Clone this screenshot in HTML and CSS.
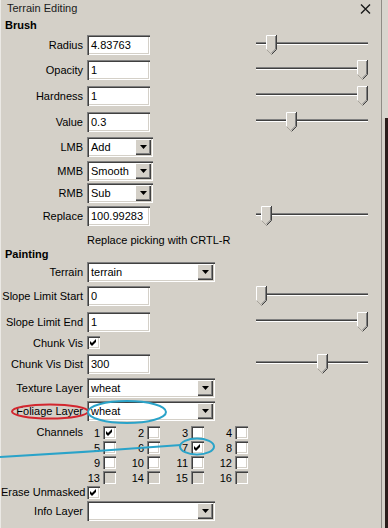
FILE: index.html
```html
<!DOCTYPE html>
<html>
<head>
<meta charset="utf-8">
<link rel="stylesheet" href="styles.css">
</head>
<body>
<div class="frame">
  <div class="panel">
    <div class="titlebar">
      <span class="title">Terrain Editing</span>
      <svg class="close" width="11" height="10" viewBox="0 0 11 10"><path d="M1 0.5 L10 9.5 M10 0.5 L1 9.5" stroke="#1a1a1a" stroke-width="1.4" fill="none"/></svg>
    </div>

    <div class="section h-brush">Brush</div>

    <div class="row h24">
      <label>Radius</label>
      <div class="input">4.83763</div>
      <div class="slider"><div class="track"></div><svg class="thumb" style="left:11px" width="11" height="20" viewBox="0 0 11 20"><use href="#thumb"/></svg></div>
    </div>
    <div class="row h26">
      <label>Opacity</label>
      <div class="input">1</div>
      <div class="slider"><div class="track"></div><svg class="thumb" style="left:102px" width="11" height="20" viewBox="0 0 11 20"><use href="#thumb"/></svg></div>
    </div>
    <div class="row h26">
      <label>Hardness</label>
      <div class="input">1</div>
      <div class="slider"><div class="track"></div><svg class="thumb" style="left:102px" width="11" height="20" viewBox="0 0 11 20"><use href="#thumb"/></svg></div>
    </div>
    <div class="row h26">
      <label>Value</label>
      <div class="input">0.3</div>
      <div class="slider"><div class="track"></div><svg class="thumb" style="left:31px" width="11" height="20" viewBox="0 0 11 20"><use href="#thumb"/></svg></div>
    </div>
    <div class="row h24">
      <label>LMB</label>
      <div class="select narrow"><span class="val">Add</span><span class="btn"><svg width="7" height="4" viewBox="0 0 7 4"><path d="M0 0H7L3.5 4Z" fill="#000"/></svg></span></div>
    </div>
    <div class="row h24">
      <label>MMB</label>
      <div class="select narrow"><span class="val">Smooth</span><span class="btn"><svg width="7" height="4" viewBox="0 0 7 4"><path d="M0 0H7L3.5 4Z" fill="#000"/></svg></span></div>
    </div>
    <div class="row h20">
      <label>RMB</label>
      <div class="select narrow"><span class="val">Sub</span><span class="btn"><svg width="7" height="4" viewBox="0 0 7 4"><path d="M0 0H7L3.5 4Z" fill="#000"/></svg></span></div>
    </div>
    <div class="row h26">
      <label>Replace</label>
      <div class="input">100.99283</div>
      <div class="slider"><div class="track"></div><svg class="thumb" style="left:6px" width="11" height="20" viewBox="0 0 11 20"><use href="#thumb"/></svg></div>
    </div>
    <div class="row h18">
      <span></span>
      <span class="hint">Replace picking with CRTL-R</span>
    </div>

    <div class="section h-paint">Painting</div>

    <div class="row h22">
      <label>Terrain</label>
      <div class="select wide"><span class="val">terrain</span><span class="btn"><svg width="7" height="4" viewBox="0 0 7 4"><path d="M0 0H7L3.5 4Z" fill="#000"/></svg></span></div>
    </div>
    <div class="row h26">
      <label>Slope Limit Start</label>
      <div class="input">0</div>
      <div class="slider"><div class="track"></div><svg class="thumb" style="left:1px" width="11" height="20" viewBox="0 0 11 20"><use href="#thumb"/></svg></div>
    </div>
    <div class="row h25">
      <label>Slope Limit End</label>
      <div class="input">1</div>
      <div class="slider"><div class="track"></div><svg class="thumb" style="left:102px" width="11" height="20" viewBox="0 0 11 20"><use href="#thumb"/></svg></div>
    </div>
    <div class="row h17">
      <label>Chunk Vis</label>
      <div class="cb checked"><svg width="13" height="13" viewBox="0 0 13 13"><path d="M3 5 L5 7 L9 3 L9 6 L5 10 L3 8 Z" fill="#000"/></svg></div>
    </div>
    <div class="row h25">
      <label>Chunk Vis Dist</label>
      <div class="input">300</div>
      <div class="slider"><div class="track"></div><svg class="thumb" style="left:62px" width="11" height="20" viewBox="0 0 11 20"><use href="#thumb"/></svg></div>
    </div>
    <div class="row h24">
      <label>Texture Layer</label>
      <div class="select wide"><span class="val">wheat</span><span class="btn"><svg width="7" height="4" viewBox="0 0 7 4"><path d="M0 0H7L3.5 4Z" fill="#000"/></svg></span></div>
    </div>
    <div class="row h22">
      <label>Foliage Layer</label>
      <div class="select wide"><span class="val">wheat</span><span class="btn"><svg width="7" height="4" viewBox="0 0 7 4"><path d="M0 0H7L3.5 4Z" fill="#000"/></svg></span></div>
    </div>

    <div class="channels">
      <label>Channels</label>
      <div class="chgrid">
        <div class="ch"><span class="n">1</span><span class="cb"><svg width="13" height="13" viewBox="0 0 13 13"><path d="M3 5 L5 7 L9 3 L9 6 L5 10 L3 8 Z" fill="#000"/></svg></span></div>
        <div class="ch"><span class="n">2</span><span class="cb"></span></div>
        <div class="ch"><span class="n">3</span><span class="cb"></span></div>
        <div class="ch"><span class="n">4</span><span class="cb"></span></div>
        <div class="ch"><span class="n">5</span><span class="cb"></span></div>
        <div class="ch"><span class="n">6</span><span class="cb"></span></div>
        <div class="ch"><span class="n">7</span><span class="cb"><svg width="13" height="13" viewBox="0 0 13 13"><path d="M3 5 L5 7 L9 3 L9 6 L5 10 L3 8 Z" fill="#000"/></svg></span></div>
        <div class="ch"><span class="n">8</span><span class="cb"></span></div>
        <div class="ch"><span class="n">9</span><span class="cb"></span></div>
        <div class="ch"><span class="n">10</span><span class="cb"></span></div>
        <div class="ch"><span class="n">11</span><span class="cb"></span></div>
        <div class="ch"><span class="n">12</span><span class="cb"></span></div>
        <div class="ch"><span class="n">13</span><span class="cb off"></span></div>
        <div class="ch"><span class="n">14</span><span class="cb off"></span></div>
        <div class="ch"><span class="n">15</span><span class="cb off"></span></div>
        <div class="ch"><span class="n">16</span><span class="cb off"></span></div>
      </div>
    </div>

    <div class="row h16">
      <label>Erase Unmasked</label>
      <div class="cb"><svg width="13" height="13" viewBox="0 0 13 13"><path d="M3 5 L5 7 L9 3 L9 6 L5 10 L3 8 Z" fill="#000"/></svg></div>
    </div>
    <div class="row h22">
      <label>Info Layer</label>
      <div class="select wide"><span class="val"></span><span class="btn"><svg width="7" height="4" viewBox="0 0 7 4"><path d="M0 0H7L3.5 4Z" fill="#000"/></svg></span></div>
    </div>
  </div>
  <div class="edge"><div class="edge-top"></div><div class="edge-bot"></div></div>

  <svg class="marks" width="388" height="528" viewBox="0 0 388 528">
    <ellipse cx="50" cy="411.5" rx="38" ry="7" fill="none" stroke="#d3262e" stroke-width="2"/>
    <ellipse cx="127" cy="412" rx="39" ry="11" fill="none" stroke="#2aa3c9" stroke-width="2"/>
    <ellipse cx="197" cy="446.5" rx="17" ry="8" fill="none" stroke="#2aa3c9" stroke-width="2"/>
    <path d="M0 457 Q 90 452 181 445" fill="none" stroke="#2aa3c9" stroke-width="2"/>
  </svg>
</div>

<svg width="0" height="0" class="defs">
  <defs>
    <g id="thumb">
      <path d="M0.5 0.5 H10.5 V14.5 L5.5 19.5 L0.5 14.5 Z" fill="#d4d0c8"/>
      <path d="M0.5 15 V0.5 H10" fill="none" stroke="#ffffff" stroke-width="1"/>
      <path d="M10.5 0 V14.5 L5.5 19.5" fill="none" stroke="#404040" stroke-width="1"/>
      <path d="M9.5 1 V14 L5.5 18" fill="none" stroke="#808080" stroke-width="1"/>
      <path d="M0.5 14.5 L5.5 19.5" fill="none" stroke="#a8a49c" stroke-width="1"/>
    </g>
  </defs>
</svg>
</body>
</html>
```

FILE: styles.css
```css
* { box-sizing: border-box; }

html, body {
  margin: 0;
  padding: 0;
}

body {
  width: 388px;
  height: 528px;
  overflow: hidden;
  background: #d4d0c8;
  color: #000;
  font-family: "Liberation Sans", Arial, sans-serif;
  font-size: 11px;
}

.defs {
  position: absolute;
}

.frame {
  position: relative;
  display: flex;
  height: 528px;
}

.panel {
  width: 382px;
  border-right: 1px solid #8f8c86;
  border-left: 1px solid #ebe9e5;
}

.edge {
  flex: 1;
  display: flex;
  flex-direction: column;
}

.edge-top {
  height: 118px;
  background: #d8d5ce;
}

.edge-bot {
  flex: 1;
  background: linear-gradient(to right, #d4d0c8 0 3px, #2a1c1a 3px);
}

.titlebar {
  height: 16px;
  display: flex;
  align-items: center;
  justify-content: space-between;
  padding: 0 10px 0 6px;
}

.title {
  color: #1a1a1a;
}

.close {
  display: block;
  margin-top: 1px;
}

.section {
  font-weight: bold;
  padding-left: 4px;
  display: flex;
  align-items: center;
}

.h-brush { height: 17px; }
.h-paint { height: 14px; }

.row {
  display: grid;
  grid-template-columns: 82px 164px 113px;
  column-gap: 4px;
  align-items: center;
}

.row label,
.channels label {
  text-align: right;
  white-space: nowrap;
}

.h16 { height: 16px; }
.h17 { height: 17px; }
.h18 { height: 18px; }
.h20 { height: 20px; }
.h22 { height: 22px; }
.h24 { height: 24px; }
.h25 { height: 25px; }
.h26 { height: 26px; }

.hint {
  grid-column: 2 / 4;
  white-space: nowrap;
  padding-top: 3px;
}

.input {
  width: 63px;
  height: 20px;
  line-height: 20px;
  padding: 0 4px;
  background: #fff;
  box-shadow: inset 1px 1px #808080, inset 2px 2px #404040, inset -1px -1px #ffffff, inset -2px -2px #d4d0c8;
  white-space: nowrap;
  overflow: hidden;
}

.select {
  height: 20px;
  display: flex;
  align-items: center;
  padding: 2px;
  background: #fff;
  box-shadow: inset 1px 1px #808080, inset 2px 2px #404040, inset -1px -1px #ffffff, inset -2px -2px #d4d0c8;
}

.select.narrow { width: 66px; }
.select.wide { width: 128px; }

.select .val {
  flex: 1;
  padding-left: 2px;
  line-height: 16px;
}

.select .btn {
  width: 16px;
  height: 16px;
  display: flex;
  align-items: center;
  justify-content: center;
  background: #d4d0c8;
  box-shadow: inset 1px 1px #ffffff, inset -1px -1px #404040, inset -2px -2px #808080;
}

.select .btn svg { display: block; }

.slider {
  position: relative;
  height: 20px;
}

.track {
  position: absolute;
  left: 1px;
  right: 0;
  top: 7px;
  height: 3px;
  background: #404040;
  border-top: 1px solid #808080;
  border-bottom: 1px solid #ffffff;
}

.thumb {
  position: absolute;
  top: 0;
  display: block;
}

.cb {
  display: block;
  width: 13px;
  height: 13px;
  background: #fff;
  box-shadow: inset 1px 1px #808080, inset 2px 2px #404040, inset -1px -1px #ffffff, inset -2px -2px #d4d0c8;
}

.cb svg { display: block; }

.cb.off { background: #d4d0c8; }

.channels {
  display: grid;
  grid-template-columns: 82px auto;
  column-gap: 4px;
  align-items: start;
  padding-top: 3px;
  height: 62px;
}

.channels label {
  line-height: 15px;
}

.chgrid {
  display: grid;
  grid-template-columns: repeat(4, 44px);
  grid-auto-rows: 15px;
}

.ch {
  display: flex;
  align-items: center;
  gap: 3px;
}

.ch .n {
  width: 13px;
  text-align: right;
}

.marks {
  position: absolute;
  left: 0;
  top: 0;
  pointer-events: none;
}
```
